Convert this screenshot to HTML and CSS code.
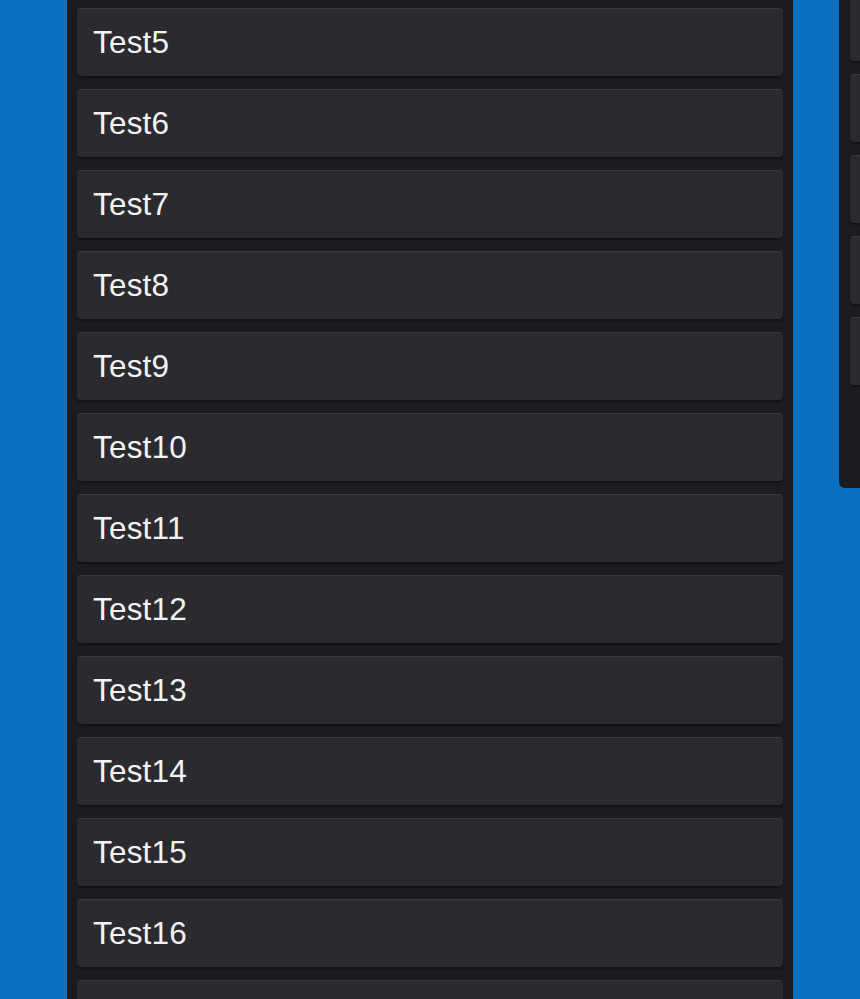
FILE: index.html
```html
<!DOCTYPE html>
<html>
<head>
<meta charset="utf-8">
<link rel="stylesheet" href="styles.css">
</head>
<body>
<div class="board">
  <div class="lane lane-main">
    <div class="card">Test5</div>
    <div class="card">Test6</div>
    <div class="card">Test7</div>
    <div class="card">Test8</div>
    <div class="card">Test9</div>
    <div class="card">Test10</div>
    <div class="card">Test11</div>
    <div class="card">Test12</div>
    <div class="card">Test13</div>
    <div class="card">Test14</div>
    <div class="card">Test15</div>
    <div class="card">Test16</div>
    <div class="card"></div>
  </div>
  <div class="lane lane-side">
    <div class="card"></div>
    <div class="card"></div>
    <div class="card"></div>
    <div class="card"></div>
    <div class="card"></div>
  </div>
</div>
</body>
</html>
```
FILE: styles.css
```css
html, body {
  margin: 0;
  padding: 0;
  height: 999px;
  overflow: hidden;
  background: #0870c3;
}
.board {
  display: flex;
  align-items: flex-start;
  gap: 46px;
  padding-left: 67px;
  height: 999px;
  overflow: hidden;
}
.lane {
  background: #1c1b1f;
  display: flex;
  flex-direction: column;
  gap: 13px;
  padding: 0 10px;
  flex-shrink: 0;
  box-sizing: border-box;
}
.lane-main {
  width: 726px;
  padding-top: 8px;
  height: 1100px;
}
.lane-side {
  width: 300px;
  margin-top: -20px;
  padding-top: 13px;
  padding-bottom: 103px;
  border-radius: 0 0 6px 6px;
  padding-left: 11px;
}
.card {
  height: 68px;
  flex-shrink: 0;
  box-sizing: border-box;
  background: #2b2a2f;
  border-top: 1px solid #3a393e;
  border-radius: 4px;
  box-shadow: 0 2px 2px rgba(0, 0, 0, 0.35);
  color: #f4f4f6;
  font-family: "Liberation Sans", Arial, sans-serif;
  font-size: 31.5px;
  letter-spacing: 0.2px;
  line-height: 66px;
  padding-left: 16px;
}
```
